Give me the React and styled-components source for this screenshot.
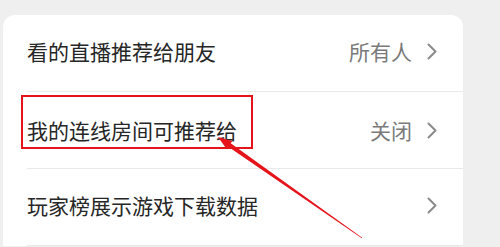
import React from 'react';
import styled, { createGlobalStyle } from 'styled-components';

const GlobalStyle = createGlobalStyle`
  html, body {
    margin: 0;
    padding: 0;
    background: #f0f0f0;
    font-family: "Noto Sans CJK SC", "Noto Sans", sans-serif;
  }
`;

const Page = styled.div`
  position: relative;
  width: 500px;
  height: 247px;
  overflow: hidden;
  background: #efefef;
  padding: 15px 0 0 3px;
  box-sizing: border-box;
`;

const Card = styled.div`
  width: 460px;
  background: #fff;
  border-radius: 12px 12px 0 0;
`;

const Row = styled.div`
  padding-left: 24px;
`;

const RowInner = styled.div`
  height: 76px;
  display: flex;
  align-items: center;
  justify-content: space-between;
  padding-right: 26px;
  border-bottom: 1px solid #e9e9e9;
  box-sizing: content-box;
`;

const Content = styled.div`
  flex: 1;
  display: flex;
  align-items: center;
  justify-content: space-between;
  margin-top: ${p => p.$shift}px;
`;

const Label = styled.div`
  font-size: 21px;
  color: #262626;
  line-height: 1;
`;

const Right = styled.div`
  display: flex;
  align-items: center;
  gap: 15px;
  font-size: 21px;
  color: #7a7a7a;
  line-height: 1;
`;

const Highlight = styled.div`
  position: absolute;
  left: 21px;
  top: 95px;
  width: 232px;
  height: 54px;
  border: 2px solid #e5141b;
  box-sizing: border-box;
`;

const Arrow = styled.svg`
  position: absolute;
  left: 0;
  top: 0;
`;

const Chevron = () => (
  <svg width="10" height="17" viewBox="0 0 10 17">
    <path d="M1.5 1.5 L8.5 8.5 L1.5 15.5" fill="none" stroke="#8a8a8a" strokeWidth="2" strokeLinecap="round" strokeLinejoin="round" />
  </svg>
);

const rows = [
  { label: '看的直播推荐给朋友', value: '所有人', shift: -3 },
  { label: '我的连线房间可推荐给', value: '关闭', shift: 0 },
  { label: '玩家榜展示游戏下载数据', value: '', shift: -3 },
];

export default function App() {
  return (
    <>
      <GlobalStyle />
      <Page>
        <Card>
          {rows.map(r => (
            <Row key={r.label}>
              <RowInner>
                <Content $shift={r.shift}>
                  <Label>{r.label}</Label>
                  <Right>
                    {r.value && <span>{r.value}</span>}
                    <Chevron />
                  </Right>
                </Content>
              </RowInner>
            </Row>
          ))}
        </Card>
        <Highlight />
        <Arrow width="500" height="247" viewBox="0 0 500 247">
          <polygon
            points="218,137 232.4,140.9 230.7,143.3 362.2,237.8 361.8,238.2 228.3,146.7 226.6,149.1"
            fill="#e5141b"
          />
        </Arrow>
      </Page>
    </>
  );
}
